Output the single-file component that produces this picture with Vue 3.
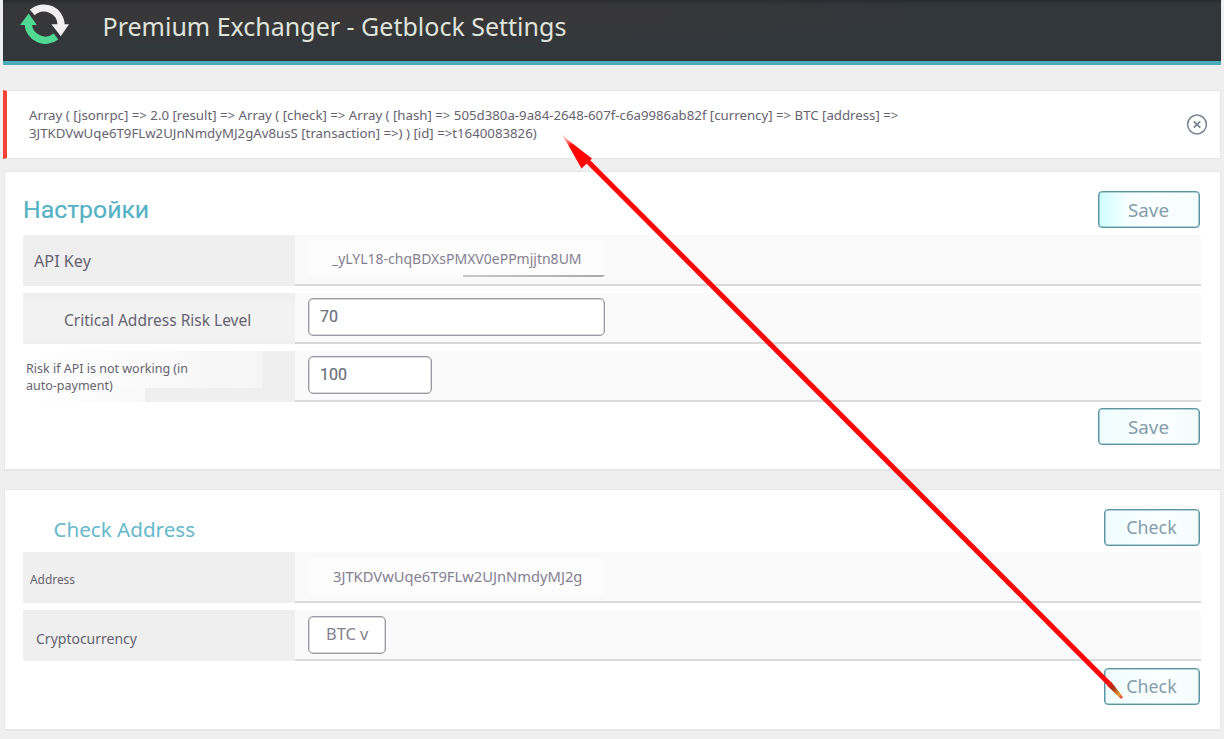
<script setup>
const settings = [
  { label: 'API Key', cls: 'api', value: '_yLYL18-chqBDXsPMXV0ePPmjjtn8UM', field: 'plain underlined' },
  { label: 'Critical Address Risk Level', cls: 'critical', value: '70', field: 'input wide' },
  { label: 'Risk if API is not working (in auto-payment)', cls: 'risk', value: '100', field: 'input narrow' }
]
const check = [
  { label: 'Address', cls: 'address', value: '3JTKDVwUqe6T9FLw2UJnNmdyMJ2g', field: 'plain wallet' },
  { label: 'Cryptocurrency', cls: 'crypto', value: 'BTC v', field: 'input select' }
]
</script>

<template>
  <div class="page">
    <header class="header">
      <svg class="logo" width="50" height="44" viewBox="0 0 50 44">
        <path d="M12.3 11.5A17.2 17.2 0 0 1 41.1 24" fill="none" stroke="#f1eff0" stroke-width="7.2" />
        <path d="M31.4 23.3H49L40.8 35.3Z" fill="#f1eff0" />
        <path d="M8.2 23A17.2 17.2 0 0 0 36 35.5" fill="none" stroke="#51d994" stroke-width="7.4" />
        <path d="M0 24L8.7 12.5L16.8 24Z" fill="#51d994" />
      </svg>
      <h1>Premium Exchanger - Getblock Settings</h1>
    </header>

    <section class="notice">
      <p>Array ( [jsonrpc] =&gt; 2.0 [result] =&gt; Array ( [check] =&gt; Array ( [hash] =&gt; 505d380a-9a84-2648-607f-c6a9986ab82f [currency] =&gt; BTC [address] =&gt;<br>3JTKDVwUqe6T9FLw2UJnNmdyMJ2gAv8usS [transaction] =&gt;) ) [id] =&gt;t1640083826)</p>
      <svg width="22" height="22" viewBox="0 0 22 22" fill="none" stroke="#798394">
        <circle cx="11" cy="10.5" r="9.4" stroke-width="1.5" />
        <path d="M7.8 7.3L14.2 13.7M14.2 7.3L7.8 13.7" stroke-width="1.8" />
      </svg>
    </section>

    <section class="card settings">
      <div class="top"><h2 class="ru">Настройки</h2><button class="save">Save</button></div>
      <div class="rows">
        <div v-for="r in settings" :key="r.label" class="row">
          <div class="label"><span :class="r.cls">{{ r.label }}</span></div>
          <div class="cell"><div :class="r.field"><span>{{ r.value }}</span></div></div>
        </div>
      </div>
      <div class="bottom"><button class="save">Save</button></div>
    </section>

    <section class="card check">
      <div class="top"><h2 class="en">Check Address</h2><button>Check</button></div>
      <div class="rows">
        <div v-for="r in check" :key="r.label" class="row">
          <div class="label"><span :class="r.cls">{{ r.label }}</span></div>
          <div class="cell"><div :class="r.field"><span>{{ r.value }}</span></div></div>
        </div>
      </div>
      <div class="bottom"><button>Check</button></div>
    </section>

    <svg class="arrow" width="1224" height="739" viewBox="0 0 1224 739">
      <defs>
        <linearGradient id="tip" gradientUnits="userSpaceOnUse" x1="560" y1="134" x2="571" y2="146">
          <stop offset="0" stop-color="#ff8060" stop-opacity="0" />
          <stop offset="1" stop-color="#ff0505" />
        </linearGradient>
        <linearGradient id="tail" gradientUnits="userSpaceOnUse" x1="1107" y1="682" x2="1123" y2="699">
          <stop offset="0" stop-color="#ff0505" />
          <stop offset=".4" stop-color="#a83418" />
          <stop offset=".75" stop-color="#e6a02c" />
          <stop offset="1" stop-color="#e8204a" />
        </linearGradient>
      </defs>
      <path d="M586 159.5L1109 683.5" stroke="#ff0505" stroke-width="5" />
      <path d="M559 131L568 140L592 158.5L581.5 168.5L567 143Z" fill="url(#tip)" />
      <path d="M1107 685.5L1111 681.5L1123 697L1121 699Z" fill="url(#tail)" />
    </svg>
  </div>
</template>

<style>
body { margin: 0; background: #efefef; }
</style>

<style scoped>
* { box-sizing: border-box; }
.page { position: relative; height: 739px; overflow: hidden; padding: 0 3px; background: #efefef; font-family: "Noto Sans", sans-serif; color: #666370; }
h1, h2, p { margin: 0; font-weight: 400; white-space: nowrap; }
.header { height: 65px; padding-left: 17px; display: flex; align-items: flex-start; border-bottom: 4px solid #4cacbc; background: radial-gradient(ellipse at 28% 25%, #393738 0, #373739 25%, #32373b 50%); box-shadow: inset 0 5px 5px -4px #252729; }
.logo { margin-top: 1px; flex: none; }
h1 { margin: 8px 0 0 32.5px; font-size: 25px; line-height: 36px; color: #dfe3dc; }
.notice { margin-top: 25px; height: 69px; display: flex; align-items: center; justify-content: space-between; padding: 0 12px 0 22px; background: #fff; border: 1px solid #e5e5e5; border-left: 4px solid #f44336; }
.notice p { font-size: 13.24px; line-height: 18px; padding-bottom: 2px; }
.card { margin: 12px 0 0 1px; width: 1217px; background: #fff; border: 1px solid #e7e7e7; border-bottom-width: 2px; padding: 19px 20px 0 18px; }
.settings { height: 300px; }
.check { height: 242px; margin-top: 18px; }
.top { height: 44px; display: flex; justify-content: space-between; align-items: flex-start; }
h2 { color: #65b9cb; }
.ru { font: 400 24.8px/38px Roboto, sans-serif; color: #55b2c5; -webkit-text-stroke: .2px #55b2c5; }
.en { font-size: 20.6px; line-height: 40px; margin-left: 30.5px; }
button { width: 96px; height: 37px; padding: 0 1px 1px 0; border: 1px solid #5c96a3; box-shadow: inset 0 0 0 .6px #75a6b2; border-radius: 4px; background: linear-gradient(90deg, #effcfd, #fbffff 65%, #f3fbfb); font: 400 17.8px/32px "Noto Sans", sans-serif; color: #849cab; }
button.save { width: 102px; font-size: 18.8px; line-height: 34px; padding-bottom: 0; }
.top .save { background: linear-gradient(90deg, #d0ffff, #f8ffff 30%, #fbffff 55%, #f4fdfd); }
.rows { display: flex; flex-direction: column; gap: 7px; margin-right: -1px; }
.row { height: 51px; display: flex; }
.label { width: 272px; background: #efefef; display: flex; align-items: center; }
.cell { flex: 1; background: #fafafa; border-bottom: 2px solid #d9d9d9; padding: 5px 0 0 13px; }
.check .cell { padding-top: 6px; }
.api { margin-left: 11px; font-size: 16.2px; }
.critical { margin-left: 41px; font-size: 15.5px; padding-top: 2px; }
.risk { margin-left: 3px; width: 175px; font-size: 12.5px; line-height: 17px; padding-top: 1px; }
.address { margin-left: 7px; font-size: 11.9px; padding-top: 3px; }
.crypto { margin-left: 13px; font-size: 14px; padding-top: 5px; }
.row:has(.critical) .label { background: linear-gradient(#efefef 7px, #f2f2f2 8px, #f2f2f2 46px, #efefef 47px); }
.row:has(.risk) .label { background: linear-gradient(90deg, #fff, #f5f5f5 239px, #efefef 240px) 0 0 / 240px 37px no-repeat, linear-gradient(90deg, #fff, #f9f9f9) 0 37px / 122px 14px no-repeat, #efefef; }
.plain { width: 297px; height: 37px; padding-left: 24px; border-radius: 4px; background: #fcfcfc; font-size: 14px; line-height: 37px; color: #858090; }
.underlined { background: linear-gradient(90deg, #c8c8ca, #aaa) 155px 35px / 142px 2px no-repeat, #fcfcfc; }
.wallet { font-size: 14.72px; line-height: 36px; padding-left: 25px; }
.input { height: 38px; border: 1px solid #9a9ba2; box-shadow: inset 0 0 0 .5px #b5b5ba; border-radius: 5px; background: #fff; padding-left: 11px; font: 400 16px/36px Roboto, sans-serif; color: #687078; -webkit-text-stroke: .2px #687078; }
.wide { width: 297px; }
.narrow { width: 124px; }
.select { width: 78px; padding-left: 17px; font: 400 16.4px/34px "Noto Sans", sans-serif; color: #858090; -webkit-text-stroke: 0; }
.bottom { display: flex; justify-content: flex-end; padding-top: 6px; }
.check { border-top-width: 1px; }
.check .bottom { padding-top: 7px; }
.check .top { height: 43px; }
.arrow { position: absolute; inset: 0; pointer-events: none; }
</style>
